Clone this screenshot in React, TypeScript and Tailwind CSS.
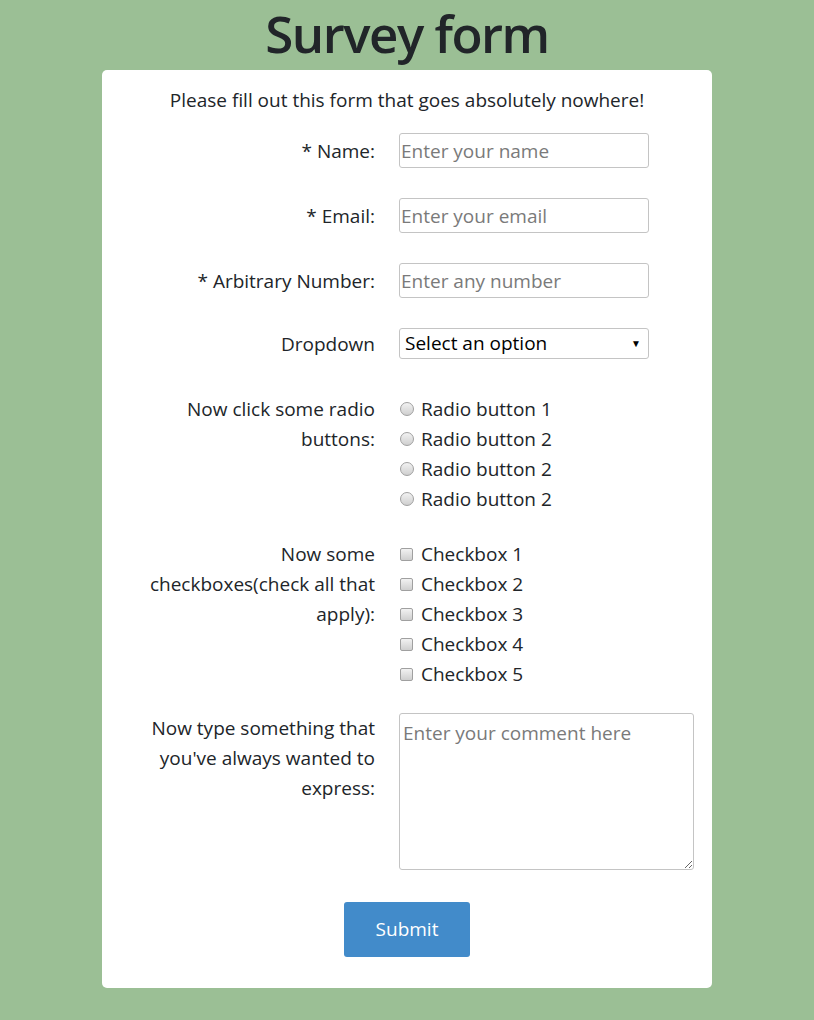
import { useState } from 'react'

const font = { fontFamily: '"Open Sans", "Noto Sans", sans-serif' }

function Radio({ label }: { label: string }) {
  return (
    <label className="flex items-center h-[30px]">
      <span className="inline-block w-[14px] h-[14px] rounded-full border border-[#a0a0a0] bg-gradient-to-b from-[#f2f2f2] to-[#cfcfcf] ml-px mr-[7px]" />
      <span>{label}</span>
    </label>
  )
}

function Checkbox({ label }: { label: string }) {
  return (
    <label className="flex items-center h-[30px]">
      <span className="inline-block w-[13px] h-[13px] rounded-[2px] border border-[#a0a0a0] bg-gradient-to-b from-[#f2f2f2] to-[#cfcfcf] ml-px mr-[8px]" />
      <span>{label}</span>
    </label>
  )
}

function Row({ label, children, className = '' }: { label: React.ReactNode; children: React.ReactNode; className?: string }) {
  return (
    <div className={`flex ${className}`}>
      <div className="w-[273px] shrink-0 text-right leading-[30px]">{label}</div>
      <div className="ml-[24px]">{children}</div>
    </div>
  )
}

export default function App() {
  const [option, setOption] = useState('')
  return (
    <div className="min-h-[1020px] bg-[#9bbf95] text-[#212529] pb-[32px]" style={font}>
      <h1 className="text-center text-[51px] font-semibold tracking-[-1.5px] leading-[66px] h-[70px]">Survey form</h1>
      <form className="w-[610px] mx-auto bg-white rounded-[5px] pt-[15px] pb-[31px] text-[19px]">
        <p className="text-center leading-[30px] mb-[18px]">Please fill out this form that goes absolutely nowhere!</p>

        <Row label="* Name:" className="items-center">
          <input className="w-[250px] h-[35px] border border-[#c4c4c4] rounded-[3px] px-[1px] placeholder:text-[#7a7a7a] outline-none" placeholder="Enter your name" />
        </Row>
        <Row label="* Email:" className="items-center mt-[30px]">
          <input className="w-[250px] h-[35px] border border-[#c4c4c4] rounded-[3px] px-[1px] placeholder:text-[#7a7a7a] outline-none" placeholder="Enter your email" />
        </Row>
        <Row label="* Arbitrary Number:" className="items-center mt-[30px]">
          <input className="w-[250px] h-[35px] border border-[#c4c4c4] rounded-[3px] px-[1px] placeholder:text-[#7a7a7a] outline-none" placeholder="Enter any number" />
        </Row>
        <Row label="Dropdown" className="items-center mt-[30px]">
          <div className="relative w-[250px] h-[31px]">
            <select
              value={option}
              onChange={(e) => setOption(e.target.value)}
              className="appearance-none w-full h-full border border-[#c4c4c4] rounded-[3px] pl-[5px] bg-white outline-none text-black"
            >
              <option value="">Select an option</option>
              <option value="1">Option 1</option>
              <option value="2">Option 2</option>
            </select>
            <span className="absolute right-[8px] top-[8px] text-[10px] text-black pointer-events-none">▼</span>
          </div>
        </Row>

        <Row label={<>Now click some radio<br />buttons:</>} className="mt-[35px]">
          <Radio label="Radio button 1" />
          <Radio label="Radio button 2" />
          <Radio label="Radio button 2" />
          <Radio label="Radio button 2" />
        </Row>

        <Row label={<>Now some<br />checkboxes(check all that<br />apply):</>} className="mt-[25px]">
          <Checkbox label="Checkbox 1" />
          <Checkbox label="Checkbox 2" />
          <Checkbox label="Checkbox 3" />
          <Checkbox label="Checkbox 4" />
          <Checkbox label="Checkbox 5" />
        </Row>

        <Row label={<>Now type something that<br />you've always wanted to<br />express:</>} className="mt-[24px]">
          <textarea
            className="block w-[295px] h-[157px] border border-[#c4c4c4] rounded-[3px] px-[3px] pt-[5px] leading-[28px] placeholder:text-[#7a7a7a] outline-none"
            placeholder="Enter your comment here"
          />
        </Row>

        <div className="flex justify-center mt-[32px]">
          <button type="button" className="w-[126px] h-[55px] bg-[#428bca] text-white rounded-[3px] text-[19px]">Submit</button>
        </div>
      </form>
    </div>
  )
}
